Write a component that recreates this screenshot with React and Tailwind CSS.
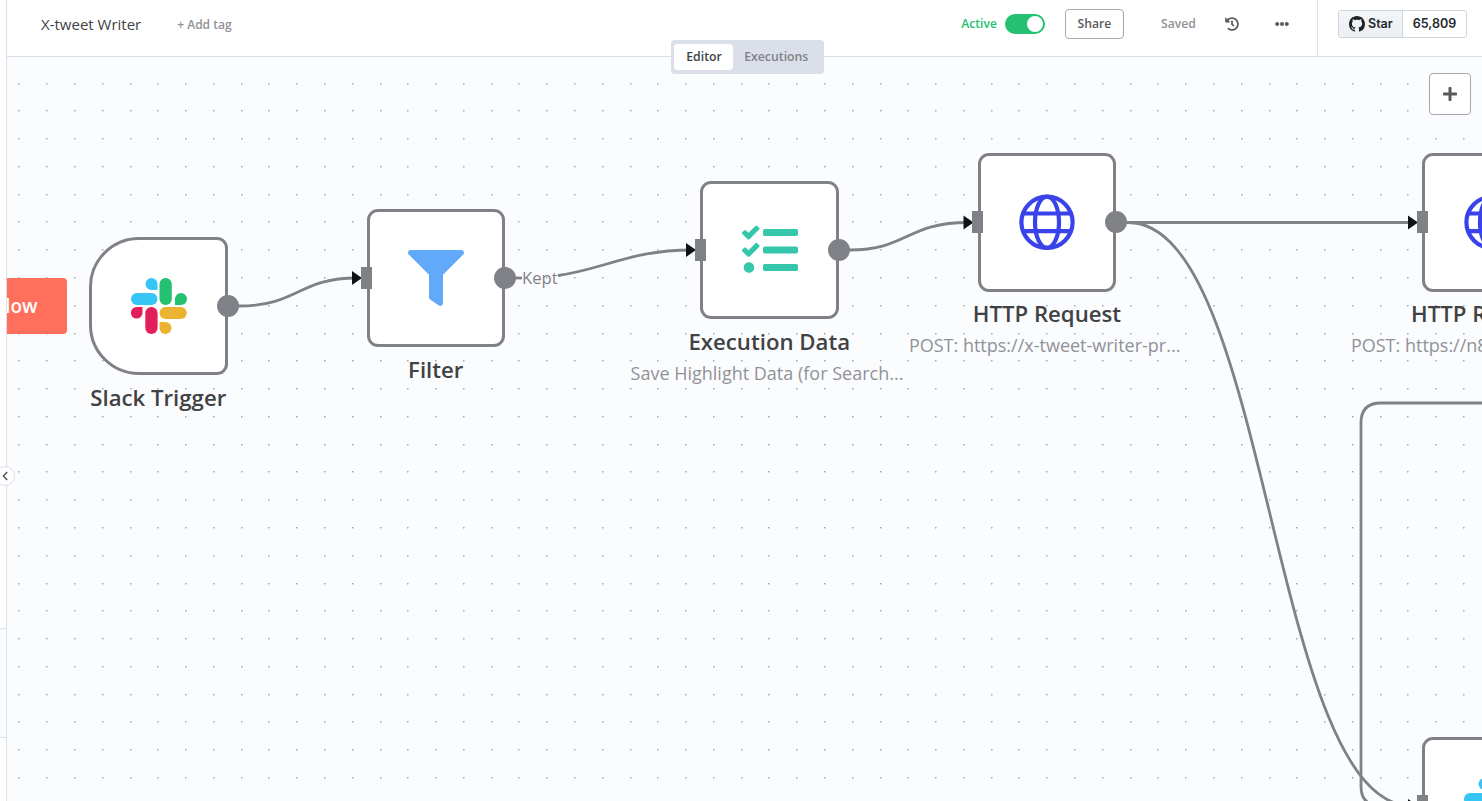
import React from "react";
import { FaFilter, FaTasks, FaHistory, FaPlus, FaEllipsisH, FaChevronLeft } from "react-icons/fa";

// Canvas grid, 20 units at the current zoom level
const GRID = 27.78;

const dots = [];
for (let y = 0; y < 26; y++) {
  for (let x = 0; x < 54; x++) {
    dots.push(`M${Math.round(18.4 + x * GRID)} ${Math.round(82.55 + y * GRID)}h1.5v1.4h-1.5z`);
  }
}
const dotPath = dots.join("");

function SlackIcon() {
  return (
    <svg viewBox="0 0 56 56" className="w-14 h-14">
      <g fill="#36c5f4">
        <path d="M20.5 0a6 6 0 0 0 0 12h6V6a6 6 0 0 0-6-6z" />
        <rect x="0" y="15" width="26.5" height="12" rx="6" />
      </g>
      <g fill="#24c170">
        <rect x="28.5" y="0" width="12.3" height="27" rx="6.1" />
        <path d="M44 27v-6a6 6 0 1 1 6 6z" />
      </g>
      <g fill="#e21e5b">
        <path d="M11.5 29v6a5.8 5.8 0 1 1-6-6z" />
        <rect x="14.3" y="29" width="12.3" height="27" rx="6.1" />
      </g>
      <g fill="#ecb330">
        <rect x="28.5" y="29" width="27.3" height="12" rx="6" />
        <path d="M28.5 44h6a6 6 0 1 1-6 6z" />
      </g>
    </svg>
  );
}

function GlobeIcon() {
  return (
    <svg viewBox="0 0 56 56" fill="none" stroke="#3a42e9" strokeWidth="4.2" className="w-14 h-14">
      <circle cx="28" cy="28.3" r="25.6" />
      <ellipse cx="28" cy="28.3" rx="12" ry="25.6" />
      <path d="M3.5 19.5h49M3.5 37.1h49" />
    </svg>
  );
}

const nodes = [
  {
    name: "Slack Trigger",
    left: 89,
    top: 236.5,
    trigger: true,
    icon: <SlackIcon />,
  },
  {
    name: "Filter",
    left: 366.5,
    top: 208.5,
    icon: <FaFilter className="w-14 h-14 text-[#61aafa]" />,
  },
  {
    name: "Execution Data",
    left: 700,
    top: 180.5,
    subtitle: "Save Highlight Data (for Search...",
    icon: <FaTasks className="w-14 h-14 text-[#36c6ab]" />,
  },
  {
    name: "HTTP Request",
    left: 977.7,
    top: 153,
    subtitle: "POST: https://x-tweet-writer-pr...",
    icon: <GlobeIcon />,
  },
  {
    name: "HTTP Request1",
    left: 1422.4,
    top: 153,
    subtitle: "POST: https://n8n-tweet-writer/...",
    icon: <GlobeIcon />,
  },
  {
    name: "",
    left: 1422.4,
    top: 736.5,
    icon: <SlackIcon />,
  },
];

function Node({ node }) {
  return (
    <div className="absolute w-[138.5px]" style={{ left: node.left, top: node.top }}>
      <div
        className={`flex items-center justify-center w-[138.5px] h-[138.5px] bg-white border-3 border-[#7f8186] pl-[0.5px] ${
          node.trigger ? "rounded-l-[50px] rounded-r-[11px]" : "rounded-[11px]"
        }`}
      >
        {node.icon}
      </div>

      {/* Input */}
      {!node.trigger && <div className="absolute -left-[5.5px] top-[58.3px] w-[11px] h-[22px] bg-[#7f8186]" />}

      {/* Output */}
      <div className="absolute -right-[11px] top-[58.3px] w-[22px] h-[22px] rounded-full bg-[#7f8186]" />

      {/* Name and subtitle */}
      <div className="flex justify-center">
        <div className="shrink-0 text-center whitespace-nowrap">
          <div className="mt-[6.8px] text-[22.2px] leading-[31px] font-semibold text-[#414244]">{node.name}</div>
          <div className="relative -left-[2.3px] text-[18px] leading-[33px] text-[#909298]">{node.subtitle}</div>
        </div>
      </div>
    </div>
  );
}

function Connections() {
  return (
    <svg width="1482" height="801" className="absolute left-0 top-0">
      <path d={dotPath} fill="#a5a7ac" />
      <g fill="none" stroke="#7f8186" strokeWidth="2.8">
        <path d="M228 306H239C298 306 298 278 357 278" />
        <path d="M505 278H522" />
        <path d="M558 275.500C604 269 632 250 692 250" />
        <path d="M839 250H850C907 250 907 222.500 968 222.500" />
        <path d="M1117 222.500H1412" />
        <path d="M1117 222.500H1128C1270 222.500 1270 806 1412 806" />
        <path d="M1490 403H1381Q1361 403 1361 423V786Q1361 806 1381 806" />
      </g>
      <g fill="#111214">
        <path d="M352 271v14l10-7z" />
        <path d="M686 243v14l10-7z" />
        <path d="M963.500 215.500v14l10-7z" />
        <path d="M1408 215.500v14l10-7z" />
        <path d="M1408 799v14l10-7z" />
      </g>
    </svg>
  );
}

function Header() {
  return (
    <header className="relative z-10 flex h-[57px] shrink-0 border-b border-[#dbdfe7] bg-white">
      <div className="flex flex-1 items-center pb-[7px]">
        <span className="pl-[34px] text-[15px] text-[#414244]">X-tweet Writer</span>
        <span className="ml-9 text-[12px] font-semibold text-[#909298]">+ Add tag</span>
      </div>

      <div className="flex items-center pb-2 text-[12.2px] font-semibold">
        <span className="pt-px text-[#24c170]">Active</span>
        <div className="ml-2 flex h-5 w-10 items-center justify-end rounded-full bg-[#24c170] px-0.5">
          <div className="h-4 w-4 rounded-full bg-white" />
        </div>
        <button className="ml-5 h-[30px] w-[59px] rounded border border-[#a6a8ae] text-[#5a5b5e]">Share</button>
        <span className="ml-[37px] w-[34px] text-[#909298]">Saved</span>
        <FaHistory className="ml-[30px] h-3.5 w-3.5 text-[#5a5b5e]" />
        <FaEllipsisH className="ml-9 mr-7 h-3.5 w-3.5 text-[#5a5b5e]" />
      </div>

      {/* GitHub stars */}
      <div className="flex w-[165px] items-center border-l border-[#dbdfe7] pb-[9px] pl-5">
        <div className="flex h-7 w-[129px] overflow-hidden rounded-[3px] border border-[#d0d5db] font-[Inter,sans-serif] text-[12.5px] font-semibold text-[#24292f]">
          <div className="flex w-16 items-center border-r border-[#d0d5db] bg-linear-to-b from-[#f3f6f9] to-[#ebeef2] pl-2.5">
            <svg viewBox="0 0 16 16" className="mr-[3px] h-4 w-4" fill="#1f2328">
              <path d="M8 0c4.420 0 8 3.580 8 8a8.013 8.013 0 0 1-5.450 7.590c-.4.080-.55-.17-.55-.38 0-.27.010-1.130.010-2.200 0-.75-.25-1.230-.54-1.480 1.780-.2 3.650-.88 3.650-3.950 0-.88-.31-1.590-.82-2.150.08-.2.360-1.020-.08-2.120 0 0-.67-.22-2.200.82-.64-.18-1.320-.27-2-.27s-1.360.09-2 .27c-1.530-1.030-2.200-.82-2.200-.82-.44 1.100-.16 1.920-.08 2.120-.51.560-.82 1.280-.82 2.150 0 3.060 1.860 3.750 3.640 3.950-.23.200-.44.550-.51 1.070-.46.210-1.610.550-2.330-.66-.15-.24-.6-.83-1.230-.82-.67.010-.27.380.010.530.34.190.73.900.82 1.130.16.450.68 1.310 2.690.940 0 .67.010 1.300.010 1.490 0 .21-.15.450-.55.380A7.995 7.995 0 0 1 0 8c0-4.420 3.580-8 8-8Z" />
            </svg>
            <span className="pt-px">Star</span>
          </div>
          <div className="flex flex-1 items-center justify-center pt-px">65,809</div>
        </div>
      </div>

      {/* Tabs */}
      <div className="absolute left-[663.5px] top-10 flex h-[34px] w-[153px] items-center rounded bg-[#dbdfe9] py-1 pl-[3.5px] pr-1 text-[12.3px] font-semibold">
        <div className="flex h-[26px] w-[59px] items-center justify-center rounded bg-white pl-px text-[#414244]">Editor</div>
        <div className="flex flex-1 items-center justify-center text-[#7f8186]">Executions</div>
      </div>
    </header>
  );
}

function App() {
  return (
    <div className="relative flex h-[801px] w-[1482px] overflow-hidden bg-[#fbfcfe] font-['Open_Sans',sans-serif]">
      {/* Canvas */}
      <div className="absolute inset-0 overflow-hidden">
        <Connections />
        <span className="absolute left-[522px] top-[266px] text-[16.7px] leading-6 text-[#7f8186]">Kept</span>
        <div className="absolute -left-[120px] top-[278px] flex h-14 w-[186.5px] items-center justify-end rounded bg-[#ff6f5c] pr-[29px] text-[19px] font-semibold text-white">
          Test workflow
        </div>
        {nodes.map((node, index) => (
          <Node key={index} node={node} />
        ))}
        <button className="absolute left-[1429px] top-[73px] flex h-[42px] w-[42px] items-center justify-center rounded border border-[#a6a8ae] bg-white">
          <FaPlus className="h-4 w-4 text-[#5a5b5e]" />
        </button>
      </div>

      {/* Sidebar edge */}
      <aside className="relative z-20 flex w-[7px] shrink-0 flex-col border-r border-[#dbdfe7] bg-white">
        <div className="h-[628px]" />
        <div className="h-[110px] border-y border-[#dbdfe7] bg-[#fbfcfe]" />
        <div className="absolute -left-[5px] top-[466px] flex h-5 w-5 items-center justify-center rounded-full border border-[#dbdfe7] bg-white">
          <FaChevronLeft className="h-2.5 w-2.5 text-[#5a5b5e]" />
        </div>
      </aside>

      <main className="flex min-w-0 flex-1 flex-col">
        <Header />
      </main>
    </div>
  );
}

export default App;
